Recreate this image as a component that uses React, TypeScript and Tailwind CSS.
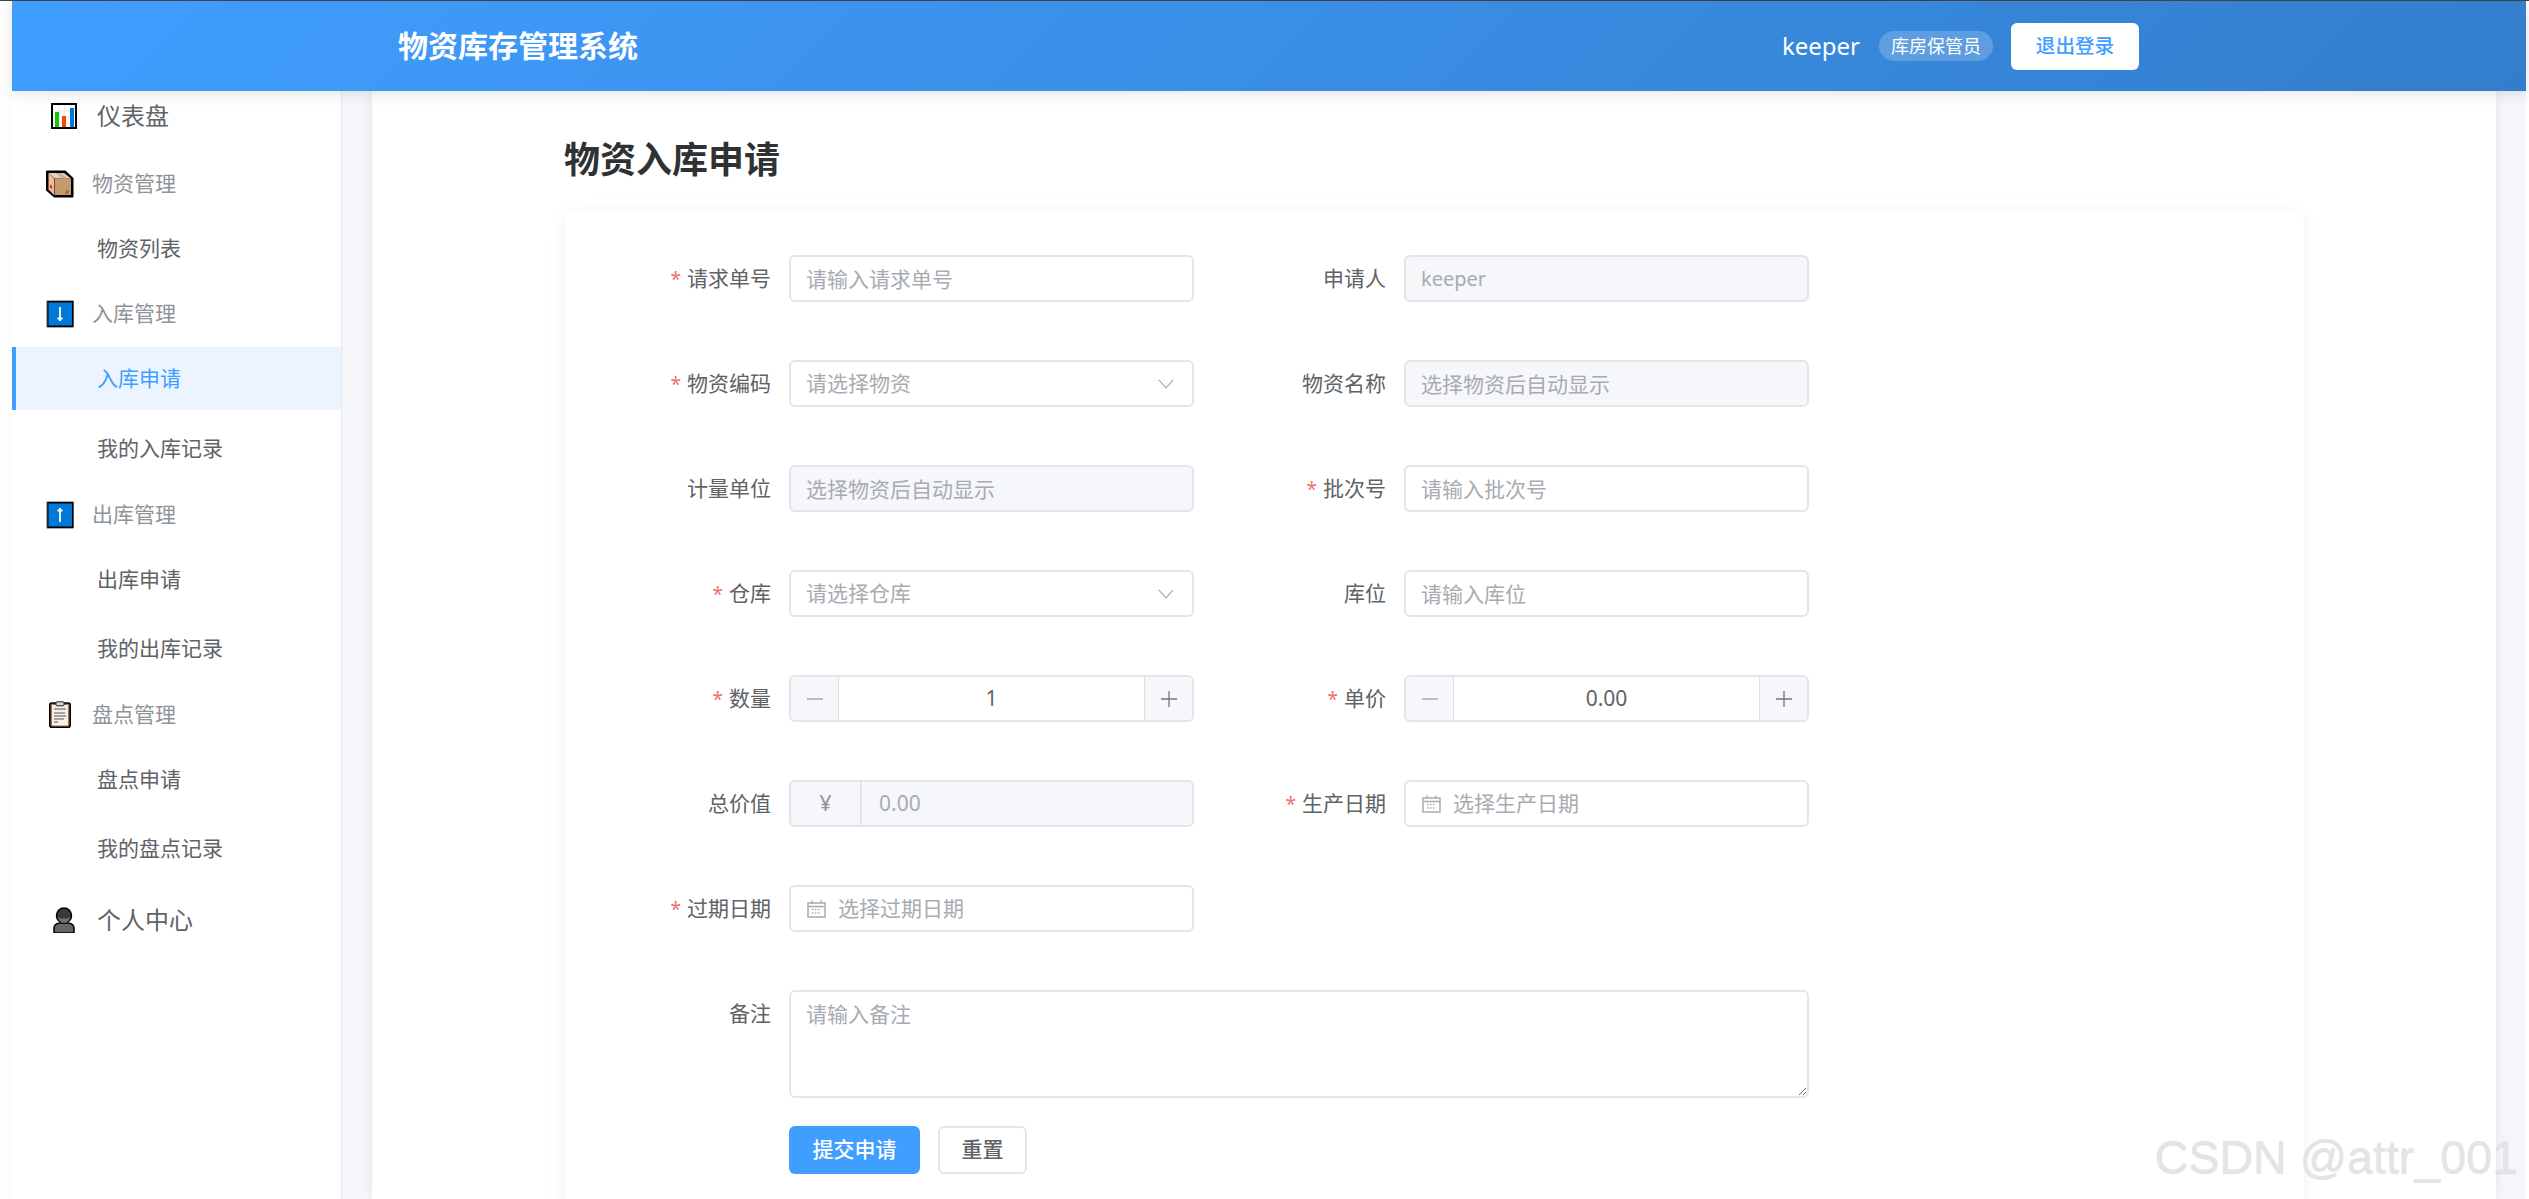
import React from "react";

const ChartIcon = () => (
  <svg width="26" height="26" viewBox="0 0 26 26" className="shrink-0">
    <rect x="0.5" y="0.5" width="25" height="25" fill="#fff" stroke="#c8c8c8" />
    <rect x="1" y="1" width="24" height="24" fill="#fff" stroke="#000" strokeWidth="2" />
    <path d="M2 8h22M2 14h22M2 20h22M8 2v22M14 2v22M20 2v22" stroke="#e6e6e6" strokeWidth="1" />
    <rect x="4" y="9" width="4" height="15" fill="#16c60c" />
    <rect x="11" y="13" width="4" height="11" fill="#f7430c" />
    <rect x="19" y="5" width="4" height="19" fill="#0078d7" />
  </svg>
);

const BoxIcon = () => (
  <svg width="28" height="28" viewBox="0 0 28 28" className="shrink-0">
    <path d="M1 1.5 L19 1.5 L26.5 8.5 L26.5 26.5 L8.5 26.5 L1 20 Z" fill="#000" stroke="#000" strokeWidth="2" strokeLinejoin="round" />
    <path d="M2.5 3 L18 3 L25 8.5 L8.5 8.5 Z" fill="#f3cdb2" />
    <path d="M2.5 3 L8 8.5 L8 25 L2.5 19.5 Z" fill="#eebd9f" />
    <path d="M8.5 8.5 L25 8.5 L25 25 L8.5 25 Z" fill="#c59b6d" />
    <path d="M10 3 L15 3 L21 8.5 L16 8.5 Z" fill="#b9b3a8" />
    <path d="M4 14.5 L6 16 L6 19 L4 17.5 Z" fill="#e81123" />
    <path d="M20 21h3M19 23h4" stroke="#6b5237" strokeWidth="1" />
  </svg>
);

const ArrowBox = ({ up }: { up?: boolean }) => (
  <svg width="28" height="28" viewBox="0 0 28 28" className="shrink-0">
    <rect x="0.5" y="0.5" width="27" height="27" fill="#555" />
    <rect x="1.5" y="1" width="26" height="26" fill="#000" />
    <rect x="2.5" y="2.5" width="23.5" height="23" fill="#0078d7" />
    {up ? (
      <path d="M14 21V7M11.5 9.5h5M13 8h2" stroke="#fff" strokeWidth="1.8" />
    ) : (
      <path d="M14 7v14M11.5 18.5h5M13 20h2" stroke="#fff" strokeWidth="1.8" />
    )}
  </svg>
);

const ClipIcon = () => (
  <svg width="22" height="27" viewBox="0 0 22 27" className="shrink-0">
    <rect x="0.8" y="2" width="20.4" height="24.2" rx="2" fill="#a5744a" stroke="#000" strokeWidth="1.6" />
    <rect x="3" y="4" width="16" height="20.5" fill="#f4f1ec" />
    <rect x="7" y="0.8" width="8" height="4" rx="1" fill="#d8d4cc" stroke="#222" strokeWidth="1" />
    <path d="M5 8h12M5 12h11M5 15h12M5 18h10M5 21h4" stroke="#555" strokeWidth="1" />
  </svg>
);

const PersonIcon = () => (
  <svg width="22" height="27" viewBox="0 0 22 27" className="shrink-0">
    <path d="M1 27 L1 22 Q1 18 6.5 17 L15.5 17 Q21 18 21 22 L21 27 Z" fill="#666" stroke="#000" strokeWidth="1.5" />
    <circle cx="11" cy="9.5" r="7.5" fill="#3a3a3a" stroke="#000" strokeWidth="1.5" />
    <path d="M5 11 Q11 14 17 11 Q16 17 11 17 Q6 17 5 11 Z" fill="#6e6e6e" />
    <path d="M8.5 11h1M12.5 11h1" stroke="#000" strokeWidth="1.2" />
  </svg>
);

const Chevron = () => (
  <svg width="16" height="10" viewBox="0 0 16 10" className="shrink-0">
    <path d="M0.8 0.8 L8 8.8 L15.2 0.8" fill="none" stroke="#a8abb2" strokeWidth="1.2" />
  </svg>
);

const Calendar = () => (
  <svg width="19" height="18" viewBox="0 0 19 18" className="shrink-0">
    <path d="M1 3h17v14H1z" fill="none" stroke="#a8abb2" strokeWidth="1.5" />
    <path d="M1 6.5h17" stroke="#a8abb2" strokeWidth="1.5" />
    <path d="M5 0.5v3M14 0.5v3" stroke="#a8abb2" strokeWidth="1.5" />
    <path d="M5 9.5h9M5 13h9" stroke="#a8abb2" strokeWidth="1.3" strokeDasharray="1.5 1.5" />
  </svg>
);

const box = "h-[47px] w-[405px] rounded-[6px] border-2 border-[#e3e5eb]";
const field = `${box} px-[15px] outline-none placeholder:text-[#a8abb2]`;

const Label = ({ text, req, w }: { text: string; req?: boolean; w: string }) => (
  <div className={`${w} shrink-0 pr-[18px] text-right text-[21px] leading-[47px] text-[#606266]`}>
    {req && <span className="mr-[6px] text-[19px] text-[#f56c6c]">*</span>}
    {text}
  </div>
);

const TextInput = ({ ph }: { ph: string }) => <input readOnly placeholder={ph} className={`${field} bg-white text-[21px]`} />;
const Disabled = ({ ph, value }: { ph: string; value?: string }) => (
  <input
    readOnly
    placeholder={ph}
    defaultValue={value}
    className={`${field} bg-[#f5f7fa] text-[#a8abb2] ${value ? "text-[20px]" : "text-[21px]"}`}
  />
);
const SelectBox = ({ ph }: { ph: string }) => (
  <div className={`${box} flex items-center justify-between bg-white pl-[15px] pr-[18px] text-[21px] text-[#a8abb2]`}>
    <span>{ph}</span>
    <Chevron />
  </div>
);
const DateBox = ({ ph }: { ph: string }) => (
  <div className={`${box} flex items-center gap-[12px] bg-white pl-[16px] text-[21px] text-[#a8abb2]`}>
    <Calendar />
    <span>{ph}</span>
  </div>
);
const Stepper = ({ value }: { value: string }) => (
  <div className={`${box} flex items-stretch overflow-hidden bg-white text-[21px] text-[#606266]`}>
    <div className="flex w-[48px] shrink-0 items-center justify-center border-r border-[#dcdfe6] bg-[#f5f7fa]">
      <svg width="18" height="18" viewBox="0 0 18 18"><path d="M1 9h16" stroke="#a8abb2" strokeWidth="1.3" /></svg>
    </div>
    <div className="flex flex-1 items-center justify-center">{value}</div>
    <div className="flex w-[48px] shrink-0 items-center justify-center border-l border-[#dcdfe6] bg-[#f5f7fa]">
      <svg width="18" height="18" viewBox="0 0 18 18"><path d="M1 9h16M9 1v16" stroke="#737579" strokeWidth="1.3" /></svg>
    </div>
  </div>
);

const Row = ({ children }: { children: React.ReactNode }) => <div className="flex h-[47px] items-start">{children}</div>;
const L1 = "w-[224px]";
const R1 = "w-[210px]";

type Item = { text: string; kind: "top" | "group" | "leaf" | "active"; mt: string; icon?: React.ReactNode };

const menu: Item[] = [
  { text: "仪表盘", kind: "top", mt: "mt-0", icon: <ChartIcon /> },
  { text: "物资管理", kind: "group", mt: "mt-[12px]", icon: <BoxIcon /> },
  { text: "物资列表", kind: "leaf", mt: "mt-[2px]" },
  { text: "入库管理", kind: "group", mt: "mt-[2px]", icon: <ArrowBox /> },
  { text: "入库申请", kind: "active", mt: "mt-[2px]" },
  { text: "我的入库记录", kind: "leaf", mt: "mt-[7px]" },
  { text: "出库管理", kind: "group", mt: "mt-[3px]", icon: <ArrowBox up /> },
  { text: "出库申请", kind: "leaf", mt: "mt-[2px]" },
  { text: "我的出库记录", kind: "leaf", mt: "mt-[6px]" },
  { text: "盘点管理", kind: "group", mt: "mt-[3px]", icon: <div className="pl-[3px]"><ClipIcon /></div> },
  { text: "盘点申请", kind: "leaf", mt: "mt-[2px]" },
  { text: "我的盘点记录", kind: "leaf", mt: "mt-[6px]" },
  { text: "个人中心", kind: "top", mt: "mt-[8px]", icon: <PersonIcon /> },
];

const MenuRow = ({ item }: { item: Item }) => {
  if (item.kind === "group")
    return (
      <div className={`${item.mt} flex h-[63px] items-center pl-[34px] text-[21px] text-[#909399]`}>
        <div className="w-[46px]">{item.icon}</div>
        {item.text}
      </div>
    );
  if (item.kind === "top")
    return (
      <div className={`${item.mt} ${item.text === "仪表盘" ? "h-[49px]" : "h-[63px]"} flex items-center pl-[34px] text-[24px] text-[#606266]`}>
        <div className="mr-[6px] w-[45px]"><div className={item.text === "仪表盘" ? "pl-[5px]" : "pl-[7px]"}>{item.icon}</div></div>
        {item.text}
      </div>
    );
  if (item.kind === "active")
    return (
      <div className={`${item.mt} flex h-[63px] items-center border-l-4 border-[#409eff] bg-[#ecf5ff] pl-[81px] text-[21px] text-[#409eff]`}>
        {item.text}
      </div>
    );
  return <div className={`${item.mt} flex h-[63px] items-center pl-[85px] text-[21px] text-[#606266]`}>{item.text}</div>;
};

export default function App() {
  return (
    <div className="relative flex h-[1199px] w-[2529px] flex-col overflow-hidden bg-white [font-family:'Noto_Sans','Noto_Sans_CJK_SC',sans-serif]">
      <div className="h-px shrink-0 bg-[#444]" />
      <div className="flex min-h-0 flex-1">
        <div className="flex min-h-0 w-[2526px] shrink-0 flex-col bg-[#f5f6fa]">
          <div className="relative z-20 flex shrink-0">
            <div className="h-[90px] w-[12px] shrink-0 bg-white" />
            <header className="flex h-[90px] flex-1 items-center bg-[linear-gradient(135deg,#409eff,#337ecc)] pl-[386px] text-white shadow-[0_2px_14px_rgba(0,0,0,0.12)]">
              <div className="text-[30px] font-bold leading-none">物资库存管理系统</div>
              <div className="ml-auto flex items-center pr-[387px]">
                <span className="text-[24px] leading-none">keeper</span>
                <span className="ml-[19px] flex h-[30px] w-[114px] items-center justify-center rounded-full bg-white/20 text-[18px]">库房保管员</span>
                <button className="ml-[18px] h-[47px] w-[128px] rounded-[6px] bg-white text-[19.6px] font-medium text-[#409eff]">退出登录</button>
              </div>
            </header>
          </div>
          <div className="flex min-h-0 flex-1">
            <div className="w-[12px] shrink-0 bg-[#fdfdfd]" />
            <aside className="w-[330px] shrink-0 border-r border-[#e6e8ee] bg-white">
              {menu.map((m) => (
                <MenuRow key={m.text} item={m} />
              ))}
            </aside>
            <div className="w-[30px] shrink-0" />
            <main className="relative w-[2124px] shrink-0 bg-white pl-[193px] shadow-[0_0_10px_rgba(0,0,0,0.07)]">
              <h1 className="-ml-px mt-[46px] text-[36px] font-bold leading-[46px] text-[#303133]">物资入库申请</h1>
              <div className="mt-[28px] w-[1739px] rounded-[12px] bg-white pt-[44px] shadow-[0_2px_20px_rgba(0,0,0,0.06)]">
                <div className="flex flex-col gap-[58px]">
                  <Row><Label text="请求单号" req w={L1} /><TextInput ph="请输入请求单号" /><Label text="申请人" w={R1} /><Disabled ph="" value="keeper" /></Row>
                  <Row><Label text="物资编码" req w={L1} /><SelectBox ph="请选择物资" /><Label text="物资名称" w={R1} /><Disabled ph="选择物资后自动显示" /></Row>
                  <Row><Label text="计量单位" w={L1} /><Disabled ph="选择物资后自动显示" /><Label text="批次号" req w={R1} /><TextInput ph="请输入批次号" /></Row>
                  <Row><Label text="仓库" req w={L1} /><SelectBox ph="请选择仓库" /><Label text="库位" w={R1} /><TextInput ph="请输入库位" /></Row>
                  <Row><Label text="数量" req w={L1} /><Stepper value="1" /><Label text="单价" req w={R1} /><Stepper value="0.00" /></Row>
                  <Row>
                    <Label text="总价值" w={L1} />
                    <div className={`${box} flex items-stretch overflow-hidden bg-[#f5f7fa] text-[21px] text-[#a8abb2]`}>
                      <div className="flex w-[71px] shrink-0 items-center justify-center border-r-2 border-[#e3e5eb] text-[#909399]">¥</div>
                      <div className="flex items-center pl-[17px]">0.00</div>
                    </div>
                    <Label text="生产日期" req w={R1} />
                    <DateBox ph="选择生产日期" />
                  </Row>
                  <Row><Label text="过期日期" req w={L1} /><DateBox ph="选择过期日期" /></Row>
                  <div className="flex items-start">
                    <Label text="备注" w={L1} />
                    <textarea readOnly placeholder="请输入备注" className="h-[108px] w-[1020px] rounded-[6px] border-2 border-[#e3e5eb] bg-white px-[15px] py-[7px] text-[21px] outline-none placeholder:text-[#a8abb2]" />
                  </div>
                </div>
                <div className="ml-[224px] mt-[28px] flex gap-[18px] pb-[60px]">
                  <button className="h-[48px] w-[131px] rounded-[6px] bg-[#409eff] text-[21px] font-medium text-white">提交申请</button>
                  <button className="h-[48px] w-[89px] rounded-[6px] border-2 border-[#e3e5eb] bg-white text-[21px] font-medium text-[#606266]">重置</button>
                </div>
              </div>
            </main>
          </div>
        </div>
        <div className="flex-1 bg-white" />
      </div>
      <div className="absolute right-[11px] top-[1129px] z-30 text-[46.6px] leading-[56px] text-[#e4e4e4] [font-family:'Liberation_Sans',sans-serif] [text-shadow:0_1px_1px_rgba(0,0,0,0.12)]">
        CSDN @attr_001
      </div>
    </div>
  );
}
